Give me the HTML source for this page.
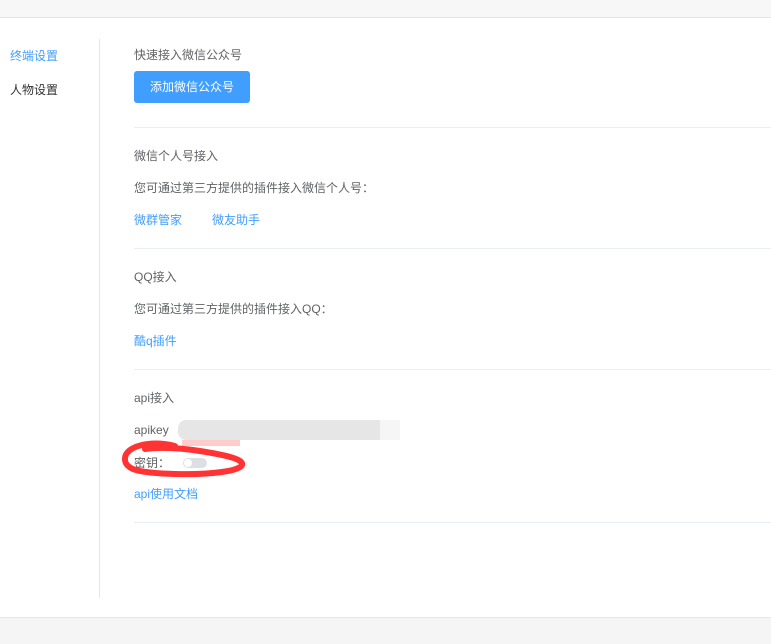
<!DOCTYPE html>
<html><head><meta charset="utf-8"><style>
*{margin:0;padding:0;box-sizing:border-box}
body{width:771px;height:644px;background:#fff;font-family:"Liberation Sans","Noto Sans CJK SC",sans-serif;font-size:12px;color:#606266;position:relative;overflow:hidden}
.top{position:absolute;left:0;top:0;width:771px;height:18px;background:#f7f7f7;border-bottom:1px solid #e6e6e6}
.bot{position:absolute;left:0;top:617px;width:771px;height:27px;background:#f5f5f5;border-top:1px solid #e6e6e6}
.side{position:absolute;left:99px;top:39px;width:1px;height:559px;background:#e6e6e6}
.t{position:absolute;white-space:nowrap;line-height:14px}
.blue{color:#409eff}
.btn{position:absolute;left:134px;top:71px;width:116px;height:32px;background:#409eff;border-radius:3px;color:#fff;font-size:12px;text-align:center;line-height:32px}
.hr{position:absolute;left:134px;width:637px;height:1px;background:#ebeef5}
</style></head><body>
<div class="top"></div>
<div class="side"></div>
<div class="t blue" style="left:10px;top:49px">终端设置</div>
<div class="t" style="left:10px;top:83px;color:#303133">人物设置</div>
<div class="t" style="left:134px;top:48px">快速接入微信公众号</div>
<div class="btn">添加微信公众号</div>
<div class="hr" style="top:127px"></div>
<div class="t" style="left:134px;top:149px">微信个人号接入</div>
<div class="t" style="left:134px;top:181px">您可通过第三方提供的插件接入微信个人号：</div>
<div class="t blue" style="left:134px;top:213px">微群管家</div>
<div class="t blue" style="left:212px;top:213px">微友助手</div>
<div class="hr" style="top:248px"></div>
<div class="t" style="left:134px;top:270px">QQ接入</div>
<div class="t" style="left:134px;top:302px">您可通过第三方提供的插件接入QQ：</div>
<div class="t blue" style="left:134px;top:334px">酷q插件</div>
<div class="hr" style="top:369px"></div>
<div class="t" style="left:134px;top:391px">api接入</div>
<div class="t" style="left:134px;top:423px">apikey</div>
<div style="position:absolute;left:178px;top:420px;width:202px;height:20px;background:#e6e6e6;border-radius:8px 0 0 8px"></div>
<div style="position:absolute;left:380px;top:420px;width:20px;height:20px;background:#f6f6f6"></div>
<div style="position:absolute;left:182px;top:440px;width:58px;height:6px;background:#fcc"></div>
<div class="t" style="left:134px;top:456px">密钥：</div>
<div style="position:absolute;left:183px;top:458px;width:24px;height:10px;border-radius:5px;background:#dcdfe6"></div>
<div style="position:absolute;left:184px;top:459px;width:8px;height:8px;border-radius:50%;background:#fff"></div>
<svg style="position:absolute;left:0;top:0" width="771" height="644"><path d="M175 446 C150 440 126 446 125 458 C124 470 140 473 175 474 C210 475 240 471 242 465 C244 459 225 455 200 451 C180 448 160 447 145 449" fill="none" stroke="#f33" stroke-width="6" stroke-linecap="round"/></svg>
<div class="t blue" style="left:134px;top:487px">api使用文档</div>
<div class="hr" style="top:522px"></div>
<div class="bot"></div>
</body></html>
